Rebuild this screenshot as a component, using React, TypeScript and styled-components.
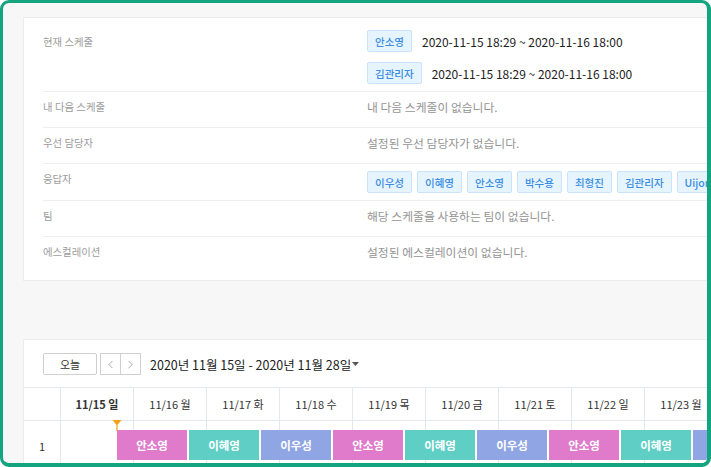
import React from "react";
import styled, { createGlobalStyle } from "styled-components";
import { ChevronLeft, ChevronRight } from "lucide-react";

const GlobalStyle = createGlobalStyle`
  html, body {
    margin: 0;
    padding: 0;
  }
  body {
    font-family: "Noto Sans CJK KR", "Noto Sans", sans-serif;
    background: #fff;
  }
  * {
    box-sizing: border-box;
  }
`;

const Frame = styled.div`
  width: 711px;
  height: 467px;
  border: 3px solid #14a47f;
  border-right-width: 4px;
  border-bottom-width: 4px;
  border-radius: 9px;
  overflow: hidden;
  background: #f7f7f7;
`;

const Page = styled.div`
  width: 800px;
  display: flex;
  flex-direction: column;
  gap: 58px;
  padding: 14px 0 0 20px;
`;

const InfoCard = styled.section`
  background: #fff;
  border: 1px solid #ececec;
  padding: 5px 0 8px 19px;
`;

const Row = styled.div`
  display: flex;
  align-items: flex-start;
  padding: 7px 0;
  border-top: 1px solid #efefef;

  &:first-child {
    border-top: none;
  }
`;

const Label = styled.div<{ $tall?: boolean }>`
  width: 324px;
  flex: 0 0 auto;
  font-size: 10.4px;
  line-height: ${(p) => (p.$tall ? "23px" : "16px")};
  color: #9c9c9c;
`;

const Value = styled.div`
  flex: 1;
  min-height: 21px;
  font-size: 11.8px;
  line-height: 16px;
  color: #949494;
`;

const ScheduleLines = styled.div`
  display: flex;
  flex-direction: column;
  gap: 10px;
`;

const ScheduleLine = styled.div`
  display: flex;
  align-items: center;
  gap: 10px;
`;

const DateText = styled.span`
  font-size: 12px;
  color: #222;
`;

const TagList = styled.div`
  display: flex;
  gap: 5px;
  white-space: nowrap;
`;

const Tag = styled.span`
  display: inline-flex;
  align-items: center;
  height: 22px;
  padding: 0 7px;
  background: #e6f4ff;
  border: 1px solid #c8e3fb;
  border-radius: 2px;
  color: #3a8de0;
  font-size: 10.5px;
  font-weight: 500;
`;

const CalendarCard = styled.section`
  background: #fff;
  border: 1px solid #ececec;
  height: 200px;
`;

const Toolbar = styled.div`
  display: flex;
  align-items: center;
  padding: 13px 19px 12px;
`;

const TodayButton = styled.button`
  width: 54px;
  height: 22px;
  padding: 0;
  border: 1px solid #cfcfcf;
  border-radius: 2px;
  background: #fff;
  color: #333;
  font-family: inherit;
  font-size: 11px;
`;

const NavGroup = styled.div`
  display: flex;
  margin-left: 3px;
`;

const NavButton = styled.button`
  width: 21px;
  height: 22px;
  padding: 0;
  display: flex;
  align-items: center;
  justify-content: center;
  border: 1px solid #cfcfcf;
  background: #fff;
  color: #8a8a8a;

  & + & {
    margin-left: -1px;
  }
`;

const RangeText = styled.div`
  display: flex;
  align-items: center;
  margin-left: 9px;
  font-size: 12.5px;
  color: #222;
`;

const Grid = styled.div`
  display: grid;
  grid-template-columns: 36px repeat(10, 73px);
`;

const HeaderRow = styled(Grid)`
  border-top: 1px solid #e4e7eb;
  border-bottom: 1px solid #e4e7eb;
`;

const HeaderCell = styled.div<{ $today?: boolean }>`
  height: 32px;
  display: flex;
  align-items: center;
  justify-content: center;
  border-left: 1px solid #e4e7eb;
  font-size: 11px;
  color: #333;
  font-weight: ${(p) => (p.$today ? 700 : 400)};

  &:first-child {
    border-left: none;
  }
`;

const BodyRow = styled(Grid)`
  position: relative;
  height: 60px;
`;

const BodyCell = styled.div`
  border-left: 1px solid #e4e7eb;

  &:first-child {
    border-left: none;
  }
`;

const RowLabel = styled.div`
  padding-top: 17px;
  text-align: center;
  font-size: 11px;
  line-height: 16px;
  color: #333;
`;

const EventLayer = styled.div`
  position: absolute;
  top: 9px;
  left: 93px;
  display: flex;
  gap: 2px;
`;

const EventBar = styled.div<{ $color: string }>`
  width: 70px;
  height: 30px;
  flex: 0 0 auto;
  display: flex;
  align-items: center;
  justify-content: center;
  background: ${(p) => p.$color};
  color: #fff;
  font-size: 11.5px;
  font-weight: 700;
`;

const NowMarker = styled.svg`
  position: absolute;
  top: -1px;
  left: 88px;
`;

const colors: Record<string, string> = {
  안소영: "#e07bcc",
  이혜영: "#5fcec4",
  이우성: "#90a5e3",
};

const days = [
  "11/15 일",
  "11/16 월",
  "11/17 화",
  "11/18 수",
  "11/19 목",
  "11/20 금",
  "11/21 토",
  "11/22 일",
  "11/23 월",
  "11/24 화",
];

const responders = ["이우성", "이혜영", "안소영", "박수용", "최형진", "김관리자", "Uijong"];

const events = ["안소영", "이혜영", "이우성", "안소영", "이혜영", "이우성", "안소영", "이혜영", "이우성", "안소영"];

const App = () => (
  <>
    <GlobalStyle />
    <Frame>
      <Page>
        <InfoCard>
          <Row>
            <Label $tall>현재 스케줄</Label>
            <ScheduleLines>
              <ScheduleLine>
                <Tag>안소영</Tag>
                <DateText>2020-11-15 18:29 ~ 2020-11-16 18:00</DateText>
              </ScheduleLine>
              <ScheduleLine>
                <Tag>김관리자</Tag>
                <DateText>2020-11-15 18:29 ~ 2020-11-16 18:00</DateText>
              </ScheduleLine>
            </ScheduleLines>
          </Row>
          <Row>
            <Label>내 다음 스케줄</Label>
            <Value>내 다음 스케줄이 없습니다.</Value>
          </Row>
          <Row>
            <Label>우선 담당자</Label>
            <Value>설정된 우선 담당자가 없습니다.</Value>
          </Row>
          <Row>
            <Label>응답자</Label>
            <TagList>
              {responders.map((name) => (
                <Tag key={name}>{name}</Tag>
              ))}
            </TagList>
          </Row>
          <Row>
            <Label>팀</Label>
            <Value>해당 스케줄을 사용하는 팀이 없습니다.</Value>
          </Row>
          <Row>
            <Label>에스컬레이션</Label>
            <Value>설정된 에스컬레이션이 없습니다.</Value>
          </Row>
        </InfoCard>

        <CalendarCard>
          <Toolbar>
            <TodayButton>오늘</TodayButton>
            <NavGroup>
              <NavButton>
                <ChevronLeft size={13} strokeWidth={1.4} />
              </NavButton>
              <NavButton>
                <ChevronRight size={13} strokeWidth={1.4} />
              </NavButton>
            </NavGroup>
            <RangeText>
              2020년 11월 15일 - 2020년 11월 28일
              <svg width="9" height="6" viewBox="0 0 9 6">
                <polygon points="1,1 8,1 4.5,5" fill="#555" />
              </svg>
            </RangeText>
          </Toolbar>

          <HeaderRow>
            <HeaderCell />
            {days.map((d, i) => (
              <HeaderCell key={d} $today={i === 0}>
                {d}
              </HeaderCell>
            ))}
          </HeaderRow>

          <BodyRow>
            <RowLabel>1</RowLabel>
            {days.map((d) => (
              <BodyCell key={d} />
            ))}
            <EventLayer>
              {events.map((name, i) => (
                <EventBar key={i} $color={colors[name]}>
                  {name}
                </EventBar>
              ))}
            </EventLayer>
            <NowMarker width="10" height="11" viewBox="0 0 10 11">
              <polygon points="0.5,0 9.5,0 5,5.5" fill="#f5a01a" />
              <line x1="5" y1="5" x2="5" y2="11" stroke="#f5a01a" strokeWidth="1.2" />
            </NowMarker>
          </BodyRow>
        </CalendarCard>
      </Page>
    </Frame>
  </>
);

export default App;
